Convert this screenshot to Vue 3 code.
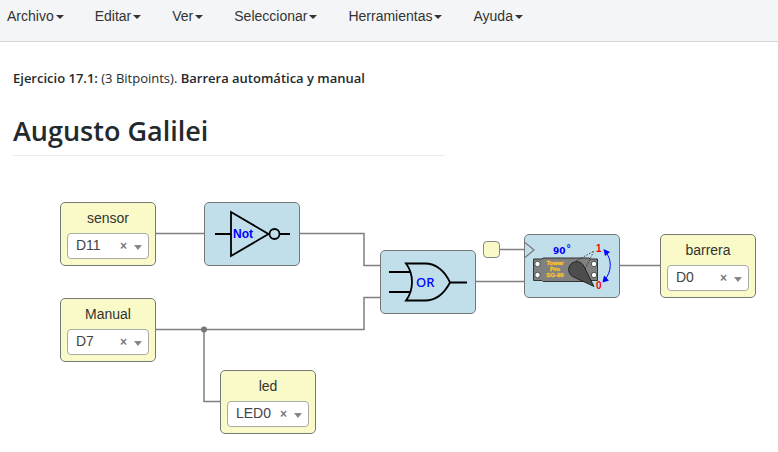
<script setup>
import { reactive } from 'vue'

const menus = ['Archivo', 'Editar', 'Ver', 'Seleccionar', 'Herramientas', 'Ayuda']

const pins = reactive([
  { id: 'sensor', x: 60, y: 46, value: 'D11', options: ['D11', 'D12', 'D13'] },
  { id: 'Manual', x: 60, y: 142, value: 'D7', options: ['D7', 'D8', 'D9'] },
  { id: 'led', x: 220, y: 214, value: 'LED0', options: ['LED0', 'LED1', 'LED2'] },
  { id: 'barrera', x: 660, y: 78, value: 'D0', options: ['D0', 'D1', 'D2'] },
])

const gates = [
  { kind: 'not', x: 204, y: 46 },
  { kind: 'or', x: 380, y: 94 },
  { kind: 'servo', x: 524, y: 78 },
]

const wires = [
  'M155 77.5H205',
  'M299 77.5H364V109.5H381',
  'M155 173.5H364V141.5H381',
  'M204 173.5V245.5H221',
  'M475 125.5H525',
  'M499 93.5H525',
  'M619 109.5H661',
]

const place = (n) => ({ left: n.x + 'px', top: n.y + 'px' })
</script>

<template>
  <div class="app">
    <nav class="menubar">
      <button v-for="m in menus" :key="m" type="button" class="menu">
        {{ m }}<span class="caret"></span>
      </button>
    </nav>

    <main>
      <header class="intro">
        <p class="exercise">
          <strong>Ejercicio 17.1:</strong> (3 Bitpoints). <strong>Barrera automática y manual</strong>
        </p>
        <h1>Augusto Galilei</h1>
      </header>

      <section class="canvas">
        <svg class="wires">
          <path v-for="w in wires" :key="w" :d="w" />
          <circle cx="204" cy="173.500" r="3" />
        </svg>

        <div v-for="p in pins" :key="p.id" class="node pin" :style="place(p)">
          <label :for="p.id">{{ p.id }}</label>
          <div class="picker">
            <select :id="p.id" v-model="p.value">
              <option v-for="o in p.options" :key="o">{{ o }}</option>
            </select>
            <button type="button" class="clear" @click="p.value = ''">×</button>
            <span class="arrow"></span>
          </div>
        </div>

        <div class="constant"></div>

        <div v-for="g in gates" :key="g.kind" class="node gate" :style="place(g)">
          <svg v-if="g.kind === 'not'" viewBox="1 1 94 62">
            <g class="ink">
              <path d="M11 32H27M27 10V54L64.500 32ZM76 32H86" />
              <circle cx="70.500" cy="32" r="5" />
            </g>
            <text class="not-text" x="29" y="36">Not</text>
          </svg>

          <svg v-else-if="g.kind === 'or'" viewBox="1 1 94 62">
            <g class="ink">
              <path d="M9 22H31M9 42H31M70 32.500H87" />
              <path d="M26 13.500H45C56 13.500 65 21 70 32.500C64 44 56 50.500 45 50.500H26C34 40 34 24 26 13.500Z" />
            </g>
            <text class="or-text" x="36" y="37">OR</text>
          </svg>

          <svg v-else viewBox="1 1 94 62">
            <path class="notch" d="M1 8.500L10 16L1 23.500" />
            <path class="body" d="M9.500 25H18L19 24H65L66 25H73.500V46.500H66L65 47.500H19L18 46.500H9.500Z" />
            <g class="holes">
              <circle cx="13.500" cy="30" r="2.700" />
              <circle cx="13.500" cy="41" r="2.700" />
              <circle cx="70" cy="30" r="2.700" />
              <circle cx="70" cy="41" r="2.700" />
            </g>
            <text class="brand" x="31" y="31">Tower</text>
            <text class="brand" x="31" y="37">Pro</text>
            <text class="brand" x="31" y="43">SG-90</text>
            <path class="ghost" d="M52 27L70 17L58 41" />
            <path class="arm" d="M60 32.500L70 52.500L50 43.200A8 8 0 1 1 60 32.500Z" />
            <text class="angle" x="29" y="20">90</text>
            <text class="degree" x="43" y="14">0</text>
            <text class="limit" x="72" y="18">1</text>
            <text class="limit" x="72" y="55">0</text>
            <path class="sweep" d="M81.500 18C88 25 88 38 80.500 46" />
            <path class="tips" d="M79.500 15L86 18L81 22ZM78.500 48.500L80 41.500L85 46.500Z" />
          </svg>
        </div>
      </section>
    </main>
  </div>
</template>

<style>
body {
  margin: 0;
  background: #fff;
}
</style>

<style scoped>
.app {
  font-family: "Liberation Sans", Arial, sans-serif;
  font-size: 14px;
  color: #333;
}

.menubar {
  display: flex;
  gap: 31px;
  padding: 6px 7px 15px;
  background: #f4f5f7;
  border-bottom: 1px solid #d5d8da;
}

.menu {
  display: flex;
  align-items: center;
  gap: 2px;
  padding: 0;
  border: 0;
  background: none;
  font: inherit;
  line-height: 20px;
  color: #333;
}

.caret {
  border: 4px solid transparent;
  border-top-color: #333;
  border-bottom: 0;
  margin-top: 1px;
}

.intro {
  padding: 26px 13px 0;
  font-family: "Noto Sans", "Open Sans", sans-serif;
  color: #24292e;
}

.exercise {
  margin: 0;
  font-family: "Open Sans", "Noto Sans", sans-serif;
  font-size: 13px;
  line-height: 20px;
}

.exercise strong {
  font-weight: 600;
}

h1 {
  box-sizing: border-box;
  max-width: 432px;
  margin: 24px 0 0;
  padding-bottom: 6px;
  border-bottom: 1px solid #eaecef;
  font-family: "Open Sans", "Noto Sans", sans-serif;
  font-size: 27px;
  font-weight: 600;
  line-height: 37px;
}

.canvas {
  position: relative;
  min-height: 290px;
}

.wires {
  position: absolute;
  inset: 0;
  width: 100%;
  height: 100%;
}

.wires path {
  fill: none;
  stroke: #808080;
  stroke-width: 1.5;
}

.wires circle {
  fill: #777;
}

.node {
  position: absolute;
  box-sizing: border-box;
  width: 96px;
  height: 64px;
  border: 1px solid #777;
  border-radius: 5px;
}

.pin {
  display: flex;
  flex-direction: column;
  gap: 5px;
  padding: 5px 6px;
  background: #fafac8;
}

.pin label {
  line-height: 20px;
  text-align: center;
}

.picker {
  position: relative;
}

.picker select {
  appearance: none;
  display: block;
  box-sizing: border-box;
  width: 100%;
  height: 26px;
  padding: 0 30px 2px 8px;
  border: 1px solid #aaa;
  border-radius: 4px;
  background: #fff;
  font: inherit;
  color: #444;
}

.clear {
  position: absolute;
  top: 3px;
  right: 22px;
  padding: 0;
  border: 0;
  background: none;
  font: bold 12px/20px "Liberation Sans", sans-serif;
  color: #777;
}

.arrow {
  position: absolute;
  top: 12px;
  right: 7px;
  border: 4px solid transparent;
  border-top: 5px solid #888;
  border-bottom: 0;
}

.constant {
  position: absolute;
  left: 483px;
  top: 85px;
  box-sizing: border-box;
  width: 17px;
  height: 17px;
  border: 1px solid #888;
  border-radius: 4px;
  background: #fafac8;
}

.gate {
  background: #c0dfea;
}

.gate svg {
  display: block;
  width: 100%;
  height: 100%;
}

.ink {
  fill: none;
  stroke: #000;
  stroke-width: 1.8;
}

.gate text {
  fill: #00f;
  font-weight: bold;
}

.gate .not-text {
  font-size: 12px;
}

.gate .or-text {
  font-family: "Noto Sans", sans-serif;
  font-size: 13px;
  font-weight: 500;
}

.notch {
  fill: none;
  stroke: #777;
  stroke-width: 1.2;
}

.body {
  fill: #808080;
  stroke: #333;
  stroke-width: 1;
}

.holes {
  fill: #fff;
  stroke: #333;
  stroke-width: 0.8;
}

.gate .brand {
  fill: #ffc02e;
  stroke: #ffc02e;
  stroke-width: 0.3;
  font-size: 6px;
  text-anchor: middle;
}

.ghost {
  fill: none;
  stroke: #222;
  stroke-width: 0.8;
  stroke-dasharray: 1.5 1.5;
}

.arm {
  fill: #4d4d4d;
  stroke: #111;
  stroke-width: 0.8;
}

.gate .angle {
  font-family: "DejaVu Sans", sans-serif;
  font-size: 9px;
}

.gate .degree {
  font-size: 6px;
}

.gate .limit {
  fill: #f00;
  font-size: 10px;
}

.sweep {
  fill: none;
  stroke: #00f;
  stroke-width: 1;
}

.tips {
  fill: #00f;
}
</style>
